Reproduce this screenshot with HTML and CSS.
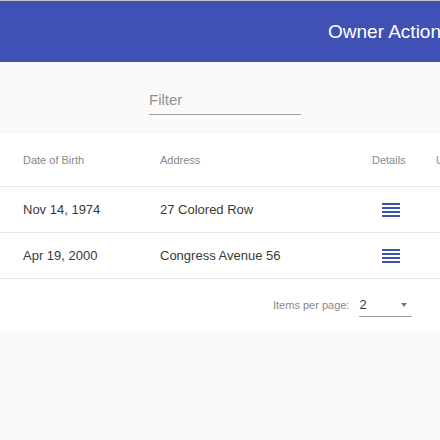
FILE: index.html
```html
<!DOCTYPE html>
<html>
<head>
<meta charset="utf-8">
<link rel="stylesheet" href="styles.css">
</head>
<body>
<header class="toolbar"><span class="title">Owner Actions</span></header>
<section class="filter-area">
  <div class="filter-field"><span class="placeholder">Filter</span></div>
</section>
<section class="card">
  <div class="row head">
    <div class="cell">Date of Birth</div>
    <div class="cell">Address</div>
    <div class="cell">Details</div>
    <div class="cell">Update</div>
  </div>
  <div class="row">
    <div class="cell">Nov 14, 1974</div>
    <div class="cell">27 Colored Row</div>
    <div class="cell"><svg class="icon" width="18" height="14" viewBox="0 0 18 14"><rect y="0" width="18" height="2"/><rect y="4" width="18" height="2"/><rect y="8" width="18" height="2"/><rect y="12" width="18" height="2"/></svg></div>
    <div class="cell"></div>
  </div>
  <div class="row">
    <div class="cell">Apr 19, 2000</div>
    <div class="cell">Congress Avenue 56</div>
    <div class="cell"><svg class="icon" width="18" height="14" viewBox="0 0 18 14"><rect y="0" width="18" height="2"/><rect y="4" width="18" height="2"/><rect y="8" width="18" height="2"/><rect y="12" width="18" height="2"/></svg></div>
    <div class="cell"></div>
  </div>
  <div class="paginator">
    <span class="ipp">Items per page:</span>
    <div class="select"><span class="value">2</span><span class="arrow"></span></div>
  </div>
</section>
</body>
</html>
```
FILE: styles.css
```css
html, body {
  margin: 0;
  padding: 0;
}
body {
  background: #fafafa;
  font-family: "Liberation Sans", Arial, sans-serif;
  width: 440px;
  overflow: hidden;
}
.toolbar {
  border-top: 1px solid #c4c4c4;
  height: 61px;
  background: #3f51b5;
  display: flex;
  align-items: center;
  padding-left: 328px;
  overflow: hidden;
  white-space: nowrap;
}
.title {
  color: #ffffff;
  font-size: 19px;
}
.filter-area {
  height: 72px;
  display: flex;
  align-items: flex-start;
}
.filter-field {
  margin-left: 149px;
  margin-top: 29px;
  width: 152px;
  height: 23px;
  border-bottom: 1px solid #a0a0a0;
}
.placeholder {
  font-size: 15px;
  color: #909090;
  line-height: 18px;
}
.card {
  background: #ffffff;
  box-shadow: 0 1px 2px rgba(0,0,0,0.04);
}
.row {
  display: grid;
  grid-template-columns: 137px 212px 64px 1fr;
  padding-left: 23px;
  height: 45px;
  align-items: center;
  border-bottom: 1px solid #e6e6e6;
  font-size: 13px;
  color: #3a3a3a;
  white-space: nowrap;
}
.row.head {
  height: 52px;
  font-size: 11px;
  color: #888888;
}
.icon {
  display: block;
  margin-left: 10px;
  fill: #3f51b5;
}
.paginator {
  height: 52px;
  display: flex;
  align-items: center;
  padding-left: 273px;
}
.ipp {
  font-size: 11px;
  color: #888888;
  margin-right: 10px;
}
.select {
  width: 53px;
  height: 21px;
  margin-top: 2px;
  border-bottom: 1px solid #a0a0a0;
  display: flex;
  align-items: center;
  justify-content: space-between;
  box-sizing: border-box;
  padding-bottom: 2px;
}
.value {
  font-size: 13px;
  color: #3a3a3a;
}
.arrow {
  width: 0;
  height: 0;
  border-left: 3.5px solid transparent;
  border-right: 3.5px solid transparent;
  border-top: 4px solid #757575;
  margin-right: 5px;
}
```
